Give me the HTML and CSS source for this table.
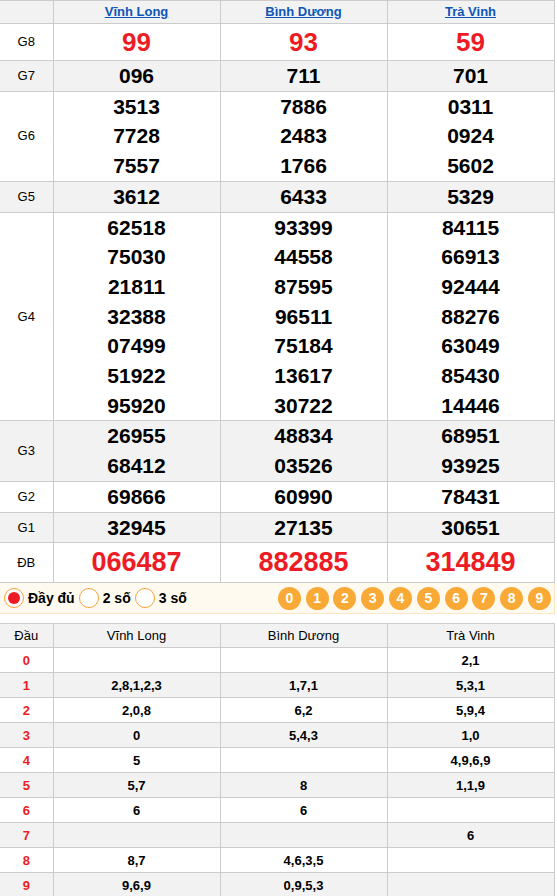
FILE: index.html
```html
<!DOCTYPE html>
<html lang="vi">
<head>
<meta charset="utf-8">
<title>Kết quả xổ số</title>
<link rel="stylesheet" href="styles.css">
</head>
<body>
<table class="kq">
  <colgroup><col class="c-lbl"><col class="c-prov"><col class="c-prov"><col class="c-prov"></colgroup>
  <thead>
    <tr class="hd"><th></th><th><a href="#">Vĩnh Long</a></th><th><a href="#">Bình Dương</a></th><th><a href="#">Trà Vinh</a></th></tr>
  </thead>
  <tbody>
    <tr class="g8"><td class="lbl">G8</td><td>99</td><td>93</td><td>59</td></tr>
    <tr><td class="lbl">G7</td><td><div>096</div></td><td><div>711</div></td><td><div>701</div></td></tr>
    <tr><td class="lbl">G6</td>
      <td><div>3513</div><div>7728</div><div>7557</div></td>
      <td><div>7886</div><div>2483</div><div>1766</div></td>
      <td><div>0311</div><div>0924</div><div>5602</div></td></tr>
    <tr><td class="lbl">G5</td><td><div>3612</div></td><td><div>6433</div></td><td><div>5329</div></td></tr>
    <tr><td class="lbl">G4</td>
      <td><div>62518</div><div>75030</div><div>21811</div><div>32388</div><div>07499</div><div>51922</div><div>95920</div></td>
      <td><div>93399</div><div>44558</div><div>87595</div><div>96511</div><div>75184</div><div>13617</div><div>30722</div></td>
      <td><div>84115</div><div>66913</div><div>92444</div><div>88276</div><div>63049</div><div>85430</div><div>14446</div></td></tr>
    <tr><td class="lbl">G3</td>
      <td><div>26955</div><div>68412</div></td>
      <td><div>48834</div><div>03526</div></td>
      <td><div>68951</div><div>93925</div></td></tr>
    <tr><td class="lbl">G2</td><td><div>69866</div></td><td><div>60990</div></td><td><div>78431</div></td></tr>
    <tr><td class="lbl">G1</td><td><div>32945</div></td><td><div>27135</div></td><td><div>30651</div></td></tr>
    <tr class="db"><td class="lbl">ĐB</td><td>066487</td><td>882885</td><td>314849</td></tr>
  </tbody>
</table>

<div class="filter">
  <div class="radios">
    <label class="radio on"><span class="dot"></span>Đầy đủ</label>
    <label class="radio"><span class="dot"></span>2 số</label>
    <label class="radio"><span class="dot"></span>3 số</label>
  </div>
  <div class="digits">
    <span>0</span><span>1</span><span>2</span><span>3</span><span>4</span><span>5</span><span>6</span><span>7</span><span>8</span><span>9</span>
  </div>
</div>

<table class="loto">
  <colgroup><col class="c-lbl"><col class="c-prov"><col class="c-prov"><col class="c-prov"></colgroup>
  <thead>
    <tr><th>Đầu</th><th>Vĩnh Long</th><th>Bình Dương</th><th>Trà Vinh</th></tr>
  </thead>
  <tbody>
    <tr><td class="d">0</td><td></td><td></td><td>2,1</td></tr>
    <tr><td class="d">1</td><td>2,8,1,2,3</td><td>1,7,1</td><td>5,3,1</td></tr>
    <tr><td class="d">2</td><td>2,0,8</td><td>6,2</td><td>5,9,4</td></tr>
    <tr><td class="d">3</td><td>0</td><td>5,4,3</td><td>1,0</td></tr>
    <tr><td class="d">4</td><td>5</td><td></td><td>4,9,6,9</td></tr>
    <tr><td class="d">5</td><td>5,7</td><td>8</td><td>1,1,9</td></tr>
    <tr><td class="d">6</td><td>6</td><td>6</td><td></td></tr>
    <tr><td class="d">7</td><td></td><td></td><td>6</td></tr>
    <tr><td class="d">8</td><td>8,7</td><td>4,6,3,5</td><td></td></tr>
    <tr><td class="d">9</td><td>9,6,9</td><td>0,9,5,3</td><td></td></tr>
  </tbody>
</table>
</body>
</html>
```

FILE: styles.css
```css
* { box-sizing: border-box; }

body {
  margin: 0;
  font-family: "Liberation Sans", Arial, sans-serif;
  color: #000;
  background: #fff;
}

table {
  border-collapse: collapse;
  table-layout: fixed;
  width: 554px;
}

col.c-lbl { width: 53px; }
col.c-prov { width: 167px; }

th, td {
  border: 1px solid #cccccc;
  padding: 0;
  text-align: center;
  vertical-align: middle;
}

th:first-child, td:first-child { border-left: none; }

thead tr { background: #f2f2f2; }
tbody tr:nth-child(even) { background: #f2f2f2; }

/* results table */
.kq thead th {
  height: 23px;
  font-size: 13px;
  font-weight: bold;
  line-height: 22px;
}
.kq thead th a { color: #0e56b5; text-decoration: underline; }

.kq td {
  font-size: 21px;
  font-weight: bold;
  line-height: 29.7px;
}
.kq td.lbl {
  font-size: 13px;
  font-weight: normal;
}

.kq tr.g8 td {
  font-size: 26px;
  line-height: 36px;
  color: #ed1c24;
}
.kq tr.db td {
  font-size: 27px;
  line-height: 39px;
  color: #ed1c24;
}
.kq tr.g8 td.lbl, .kq tr.db td.lbl {
  font-size: 13px;
  color: #000;
}

/* filter bar */
.filter {
  width: 555px;
  height: 31px;
  display: flex;
  align-items: center;
  justify-content: space-between;
  background: #fffaf0;
  border-right: 1px solid #fde6c4;
  border-bottom: 1px solid #fde6c4;
  padding: 0 3px 0 4px;
}

.radios { display: flex; align-items: center; }

.radio {
  display: flex;
  align-items: center;
  font-size: 14px;
  font-weight: bold;
  margin-right: 4px;
}

.radio .dot {
  width: 20px;
  height: 20px;
  border: 1px solid #f5a33a;
  border-radius: 50%;
  background: #fff;
  margin-right: 4px;
  display: flex;
  align-items: center;
  justify-content: center;
}
.radio.on .dot::after {
  content: "";
  width: 12px;
  height: 12px;
  border-radius: 50%;
  background: #ed1c24;
}

.digits { display: flex; gap: 4.8px; }
.digits span {
  width: 23px;
  height: 23px;
  border-radius: 50%;
  background: #f9a935;
  color: #fff;
  font-size: 14px;
  font-weight: bold;
  display: flex;
  align-items: center;
  justify-content: center;
}

/* loto table */
.loto { margin-top: 9px; }
.loto th {
  height: 24px;
  font-size: 13px;
  font-weight: normal;
}
.loto td {
  height: 25px;
  font-size: 13px;
  font-weight: bold;
}
.loto td.d { color: #ed1c24; }
```
